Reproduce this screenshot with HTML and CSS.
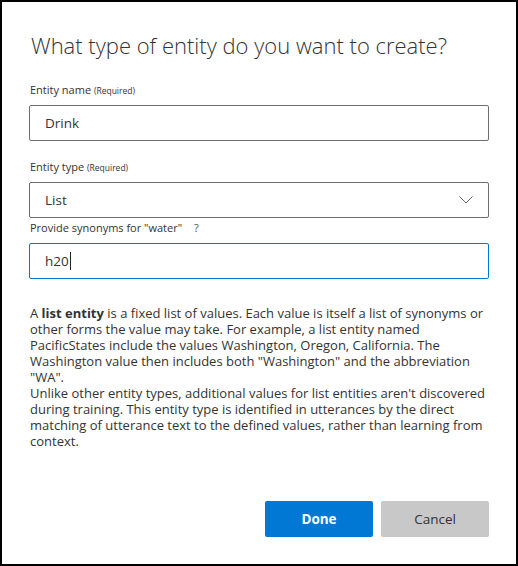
FILE: index.html
```html
<!DOCTYPE html>
<html>
<head>
<meta charset="utf-8">
<link rel="stylesheet" href="styles.css">
</head>
<body>
<div class="dialog">
  <h1 class="title">What type of entity do you want to create?</h1>
  <div class="field first">
    <div class="label">Entity name <span class="req">(Required)</span></div>
    <div class="input">Drink</div>
  </div>
  <div class="field">
    <div class="label">Entity type <span class="req">(Required)</span></div>
    <div class="input select"><span>List</span>
      <svg class="chev" width="14" height="8" viewBox="0 0 14 8"><path d="M0.5 0.5 L7 7 L13.5 0.5" fill="none" stroke="#666" stroke-width="1"/></svg>
    </div>
  </div>
  <div class="field syn">
    <div class="label">Provide synonyms for "water" <span class="help">?</span></div>
    <div class="input focus"><span>h20</span><span class="caret"></span></div>
  </div>
  <div class="desc">
    <p>A <b>list entity</b> is a fixed list of values. Each value is itself a list of synonyms or other forms the value may take. For example, a list entity named PacificStates include the values Washington, Oregon, California. The Washington value then includes both "Washington" and the abbreviation "WA".</p>
    <p>Unlike other entity types, additional values for list entities aren't discovered during training. This entity type is identified in utterances by the direct matching of utterance text to the defined values, rather than learning from context.</p>
  </div>
  <div class="actions">
    <button class="btn primary">Done</button>
    <button class="btn secondary">Cancel</button>
  </div>
</div>
</body>
</html>
```

FILE: styles.css
```css
html, body {
  margin: 0;
  padding: 0;
  background: #fff;
}
body {
  font-family: "Open Sans", "Noto Sans", sans-serif;
  color: #333;
}
.dialog {
  box-sizing: border-box;
  width: 518px;
  height: 566px;
  border: 2px solid #000;
  padding: 0 27px 0 27px;
  display: flex;
  flex-direction: column;
}
.title {
  margin: 28px 0 0 2px;
  font-size: 22px;
  font-weight: 300;
  line-height: 30px;
  color: #333;
  white-space: nowrap;
}
.field {
  display: flex;
  flex-direction: column;
}
.field.first { margin-top: 22px; }
.field + .field { margin-top: 18px; }
.field.syn { margin-top: 2px; }
.label {
  font-size: 11px;
  line-height: 16px;
  color: #333;
  margin-left: 1px;
  margin-bottom: 6px;
}
.field.syn .label { margin-bottom: 7px; }
.req {
  font-size: 8.5px;
  color: #333;
}
.help {
  margin-left: 9px;
  color: #555;
}
.input {
  box-sizing: border-box;
  height: 36px;
  border: 1px solid #6e6e6e;
  border-radius: 2px;
  padding: 0 15px;
  display: flex;
  align-items: center;
  font-size: 13.5px;
  color: #333;
}
.select {
  justify-content: space-between;
}
.chev {
  margin-right: 0;
}
.focus {
  border-color: #0078d4;
}
.caret {
  display: inline-block;
  width: 1px;
  height: 18px;
  background: #222;
  margin-left: 1px;
}
.desc {
  margin-top: 26px;
  margin-left: 1px;
  width: 464px;
  font-size: 13px;
  line-height: 16px;
  color: #333;
}
.desc p {
  margin: 0;
}
.desc b {
  font-weight: 700;
}
.actions {
  margin-top: auto;
  margin-bottom: 27px;
  display: flex;
  justify-content: flex-end;
  gap: 8px;
}
.btn {
  width: 108px;
  height: 36px;
  border: none;
  border-radius: 2px;
  font-family: "Open Sans", "Noto Sans", sans-serif;
  font-size: 13.5px;
}
.primary {
  background: #0078d4;
  color: #fff;
  font-weight: 700;
}
.secondary {
  background: #c8c8c8;
  color: #333;
}
```
